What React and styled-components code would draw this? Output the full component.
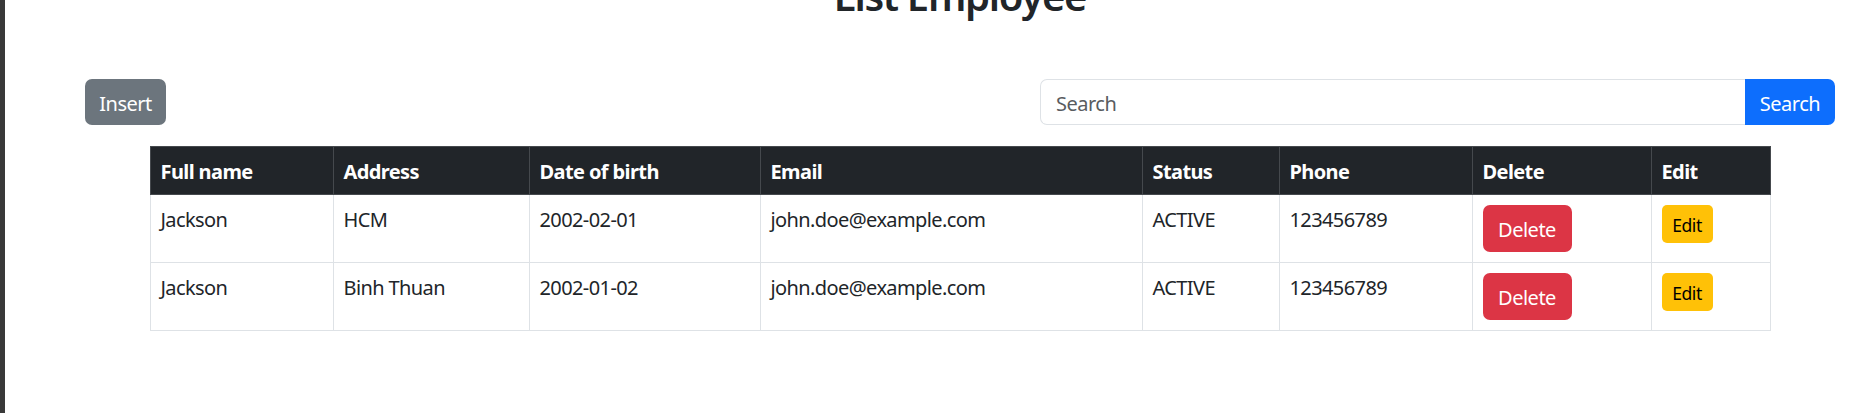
import React from 'react';
import styled, { createGlobalStyle } from 'styled-components';

const employees = [
  { name: 'Jackson', address: 'HCM', dob: '2002-02-01', email: 'john.doe@example.com', status: 'ACTIVE', phone: '123456789' },
  { name: 'Jackson', address: 'Binh Thuan', dob: '2002-01-02', email: 'john.doe@example.com', status: 'ACTIVE', phone: '123456789' },
];

const columns = [
  { title: 'Full name', width: 183 },
  { title: 'Address', width: 196 },
  { title: 'Date of birth', width: 231 },
  { title: 'Email', width: 382 },
  { title: 'Status', width: 137 },
  { title: 'Phone', width: 193 },
  { title: 'Delete', width: 179 },
  { title: 'Edit', width: 119 },
];

const App = () => {
  return (
    <>
      <GlobalStyle />
      <Page>
        <SideBar />
        <Main>
          <Title>List Employee</Title>
          <Toolbar>
            <Button $variant="secondary" $width={81}>Insert</Button>
            <SearchGroup>
              <SearchInput placeholder="Search" />
              <SearchButton>Search</SearchButton>
            </SearchGroup>
          </Toolbar>

          <Table>
            <colgroup>
              {columns.map((c) => (
                <col key={c.title} style={{ width: c.width }} />
              ))}
            </colgroup>
            <thead>
              <tr>
                {columns.map((c) => (
                  <HeadCell key={c.title}>{c.title}</HeadCell>
                ))}
              </tr>
            </thead>
            <tbody>
              {employees.map((e, i) => (
                <tr key={i}>
                  <Cell>{e.name}</Cell>
                  <Cell>{e.address}</Cell>
                  <Cell>{e.dob}</Cell>
                  <Cell>{e.email}</Cell>
                  <Cell>{e.status}</Cell>
                  <Cell>{e.phone}</Cell>
                  <Cell>
                    <Button $variant="danger" $width={89}>Delete</Button>
                  </Cell>
                  <Cell>
                    <SmallButton>Edit</SmallButton>
                  </Cell>
                </tr>
              ))}
            </tbody>
          </Table>
        </Main>
      </Page>
    </>
  );
};

const GlobalStyle = createGlobalStyle`
  html, body {
    margin: 0;
    padding: 0;
    background: #fff;
    overflow: hidden;
  }
  body {
    font-family: "Noto Sans", "Open Sans", sans-serif;
    font-size: 20px;
    line-height: 30px;
    color: #212529;
  }
  * {
    box-sizing: border-box;
  }
`;

const Page = styled.div`
  display: flex;
  height: 413px;
`;

const SideBar = styled.div`
  flex: 0 0 5px;
  background-color: #393939;
`;

const Main = styled.div`
  flex: 0 0 1750px;
  margin-left: 80px;
  display: flex;
  flex-direction: column;
`;

const Title = styled.h2`
  margin: -28px 0 0;
  font-size: 40px;
  line-height: 48px;
  font-weight: 600;
  text-align: center;
  letter-spacing: -1.3px;
  color: #212529;
`;

const Toolbar = styled.div`
  display: flex;
  justify-content: space-between;
  align-items: center;
  margin-top: 59px;
  height: 46px;
`;

const buttonColors = {
  secondary: '#6c757d',
  danger: '#dc3545',
  primary: '#0d6efd',
};

const Button = styled.button`
  width: ${({ $width }) => $width}px;
  height: ${({ $variant }) => ($variant === 'danger' ? 47 : 46)}px;
  padding: 2px 0 0;
  border: none;
  border-radius: 7px;
  background-color: ${({ $variant }) => buttonColors[$variant]};
  color: #fff;
  font-family: inherit;
  font-size: 20px;
  letter-spacing: -0.5px;
  white-space: nowrap;
  cursor: pointer;
`;

const SmallButton = styled.button`
  width: 51px;
  height: 38px;
  padding: 1px 0 0;
  border: none;
  border-radius: 5px;
  background-color: #ffc107;
  color: #000;
  font-family: inherit;
  font-size: 17.5px;
  letter-spacing: -0.4px;
  cursor: pointer;
`;

const SearchGroup = styled.div`
  display: flex;
  width: 795px;
  height: 46px;
`;

const SearchInput = styled.input`
  flex: 1;
  min-width: 0;
  height: 100%;
  padding: 2px 15px 0;
  border: 1px solid #dee2e6;
  border-right: none;
  border-radius: 7px 0 0 7px;
  font-family: inherit;
  font-size: 20px;
  letter-spacing: -0.5px;
  color: #212529;
  outline: none;

  &::placeholder {
    color: #595c5f;
  }
`;

const SearchButton = styled.button`
  flex: 0 0 90px;
  height: 100%;
  padding: 2px 0 0;
  border: none;
  border-radius: 0 7px 7px 0;
  background-color: #0d6efd;
  color: #fff;
  font-family: inherit;
  font-size: 20px;
  letter-spacing: -0.5px;
  cursor: pointer;
`;

const Table = styled.table`
  width: 1620px;
  margin: 21px auto 0;
  table-layout: fixed;
  border-collapse: collapse;
  letter-spacing: -0.6px;
`;

const HeadCell = styled.th`
  padding: 10px 10px 7px;
  background-color: #212529;
  color: #fff;
  font-weight: 700;
  text-align: left;
  vertical-align: top;
  border: 1px solid #45494d;
`;

const Cell = styled.td`
  height: 68px;
  padding: 10px;
  vertical-align: top;
  border: 1px solid #dee2e6;
  white-space: nowrap;
`;

export default App;
